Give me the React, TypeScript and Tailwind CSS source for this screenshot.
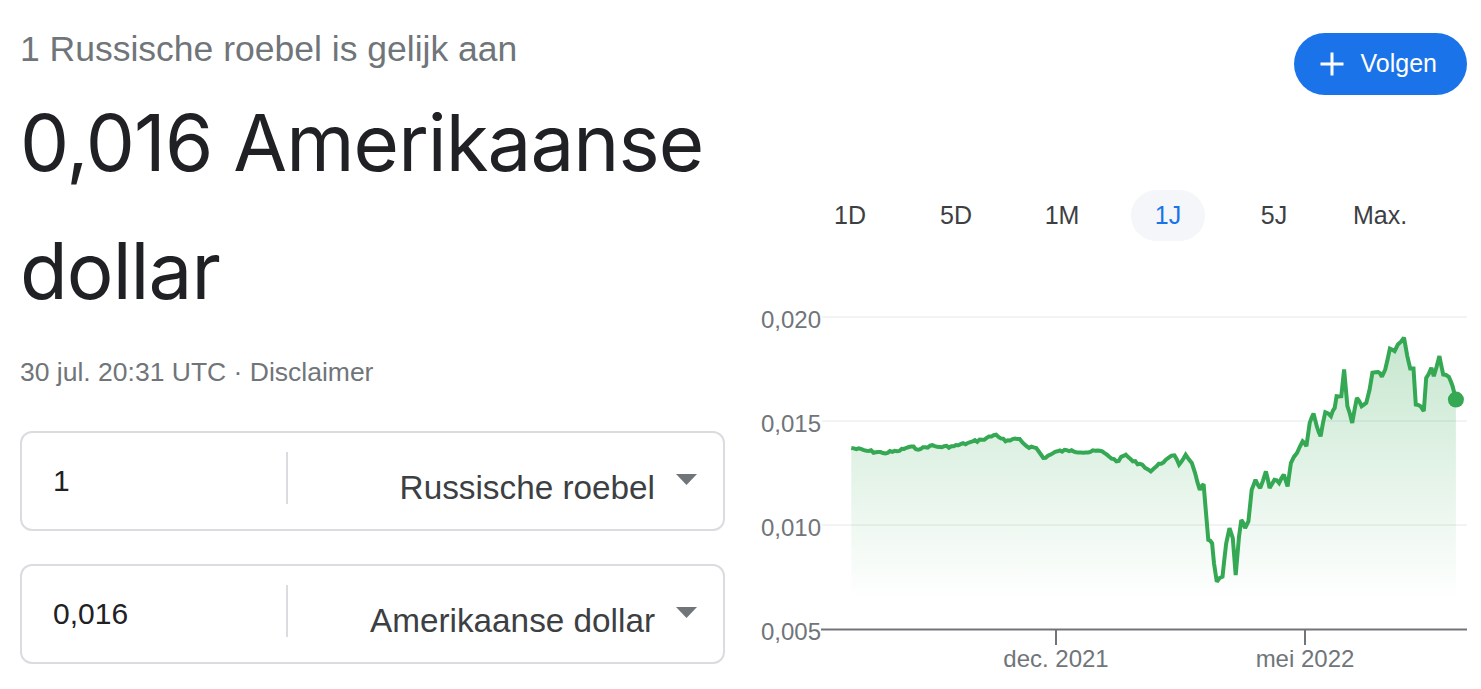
const raw: [number, number][] = [
  [233, 475], [265, 483], [300, 490], [330, 485], [355, 472], [380, 478], [400, 468],
  [420, 472], [450, 470], [480, 460], [510, 450], [540, 435], [560, 455], [590, 448],
  [605, 470], [625, 475], [640, 505], [655, 495], [670, 485], [700, 482], [730, 488],
  [760, 483], [775, 495], [795, 515], [815, 495], [830, 515], [850, 525], [868, 545],
  [880, 530], [900, 510], [918, 497], [928, 525], [942, 495], [955, 520], [962, 550],
  [972, 600], [980, 583], [990, 750], [998, 760], [1002, 820], [1008, 875], [1020, 860],
  [1028, 760], [1035, 715], [1042, 745], [1048, 855], [1055, 740], [1060, 690], [1068, 715],
  [1075, 695], [1082, 600], [1090, 570], [1100, 595], [1112, 545], [1120, 595], [1130, 570],
  [1140, 580], [1150, 555], [1158, 590], [1165, 520], [1178, 490], [1190, 455], [1198, 470],
  [1205, 400], [1213, 372], [1220, 410], [1228, 440], [1238, 368], [1250, 380], [1258, 355],
  [1262, 320], [1272, 320], [1278, 240], [1285, 350], [1295, 400], [1305, 325], [1315, 350],
  [1325, 340], [1332, 300], [1338, 250], [1350, 248], [1358, 262], [1365, 240], [1375, 178],
  [1385, 185], [1392, 165], [1405, 145], [1412, 200], [1418, 237], [1425, 237], [1430, 345],
  [1440, 350], [1447, 365], [1452, 265], [1463, 235], [1468, 260], [1480, 200], [1488, 255],
  [1500, 262], [1508, 290], [1515, 330],
]

// zoomed coords -> page coords
const base = raw.map(([zx, zy]) => [1056 + (zx - 667) * 0.4716, 317 + (zy - 83) * 0.3342])

// fill in daily wiggle between the traced points
const points: number[][] = []
let seed = 7
const rand = () => {
  seed = (seed * 9301 + 49297) % 233280
  return seed / 233280 - 0.5
}
for (let i = 0; i < base.length - 1; i++) {
  const [x0, y0] = base[i]
  const [x1, y1] = base[i + 1]
  const steps = Math.max(1, Math.round((x1 - x0) / 2.5))
  for (let s = 0; s < steps; s++) {
    const t = s / steps
    const wig = s === 0 ? 0 : rand() * 2.6
    points.push([x0 + (x1 - x0) * t, y0 + (y1 - y0) * t + wig])
  }
}
points.push(base[base.length - 1])

const linePath = points.map(([x, y], i) => `${i === 0 ? 'M' : 'L'}${x.toFixed(1)} ${y.toFixed(1)}`).join(' ')
const last = points[points.length - 1]
const areaPath = `${linePath} L${last[0].toFixed(1)} 629 L${points[0][0].toFixed(1)} 629 Z`

const tabs = ['1D', '5D', '1M', '1J', '5J', 'Max.']

function CurrencyBox({ amount, currency }: { amount: string; currency: string }) {
  return (
    <div className="flex items-center h-[100px] border-2 border-[#dadce0] rounded-[12px]">
      <div className="w-[264px] pl-[31px] text-[30px] leading-[36px] text-[#202124]">{amount}</div>
      <div className="w-[1.5px] h-[52px] bg-[#dadce0] mb-[6px]" />
      <div className="flex-1 flex items-center justify-end pr-[26px]">
        <span className="mt-[13px] text-[33.3px] leading-[40px] text-[#3c4043]">{currency}</span>
        <svg width="21" height="11" viewBox="0 0 21 11" className="ml-[21px] mb-[3px]">
          <path d="M0 0 H21 L10.5 11 Z" fill="#70757a" />
        </svg>
      </div>
    </div>
  )
}

export default function App() {
  return (
    <div className="flex w-[1481px] h-[689px] bg-white overflow-hidden font-['Liberation_Sans',Arial,sans-serif]">
      {/* left: converter */}
      <div className="w-[725px] pl-5 flex flex-col">
        <div className="mt-[29px] text-[35.5px] leading-[40px] text-[#70757a]">1 Russische roebel is gelijk aan</div>
        <div className="mt-[10px] font-['Inter',sans-serif] text-[78px] leading-[128px] text-[#202124] tracking-[-0.012em]">
          0,016 Amerikaanse dollar
        </div>
        <div className="mt-[21px] text-[26.5px] leading-[32px] text-[#70757a]">30 jul. 20:31 UTC · Disclaimer</div>
        <div className="mt-[43px] flex flex-col gap-[33px]">
          <CurrencyBox amount="1" currency="Russische roebel" />
          <CurrencyBox amount="0,016" currency="Amerikaanse dollar" />
        </div>
      </div>

      {/* right: chart */}
      <div className="flex-1 flex flex-col">
        <div className="flex justify-end pr-[14px] pt-[33px]">
          <button className="flex items-center h-[62px] pl-[26px] pr-[30px] rounded-full bg-[#1a73e8] text-white text-[25px]">
            <svg width="24" height="24" viewBox="0 0 24 24">
              <path d="M12 0.5v23M0.5 12h23" stroke="white" strokeWidth="3" fill="none" />
            </svg>
            <span className="ml-[17px]">Volgen</span>
          </button>
        </div>

        <div className="mt-[95px] ml-[72px] grid grid-cols-[repeat(6,106px)] h-[51px]">
          {tabs.map((t) => (
            <div key={t} className="flex items-center justify-center">
              {t === '1J' ? (
                <div className="w-[74px] h-[51px] rounded-full bg-[#f4f6f9] flex items-center justify-center text-[25px] text-[#1a73e8]">
                  {t}
                </div>
              ) : (
                <span className="text-[25px] text-[#3c4043]">{t}</span>
              )}
            </div>
          ))}
        </div>

        <svg width="756" height="399" viewBox="725 290 756 399" className="mt-[49px] block">
          <defs>
            <linearGradient id="fill" gradientUnits="userSpaceOnUse" x1="0" y1="337" x2="0" y2="600">
              <stop offset="0" stopColor="#34a853" stopOpacity="0.28" />
              <stop offset="1" stopColor="#34a853" stopOpacity="0" />
            </linearGradient>
          </defs>
          {[317, 421, 525].map((y) => (
            <line key={y} x1="822" x2="1467" y1={y} y2={y} stroke="#f1f3f4" strokeWidth="2" />
          ))}
          <path d={areaPath} fill="url(#fill)" />
          <path d={linePath} fill="none" stroke="#34a853" strokeWidth="4" strokeLinejoin="miter" strokeMiterlimit="2" />
          <circle cx={last[0]} cy={last[1]} r="8" fill="#34a853" />
          <line x1="821" x2="1467" y1="629.5" y2="629.5" stroke="#70757a" strokeWidth="2" />
          <line x1="1056" x2="1056" y1="629" y2="645" stroke="#70757a" strokeWidth="2" />
          <line x1="1305" x2="1305" y1="629" y2="645" stroke="#70757a" strokeWidth="2" />
          <g fontFamily="'Liberation Sans', Arial, sans-serif" fontSize="24" fill="#70757a">
            <text x="821" y="327.5" textAnchor="end">0,020</text>
            <text x="821" y="431.5" textAnchor="end">0,015</text>
            <text x="821" y="535.5" textAnchor="end">0,010</text>
            <text x="821" y="639.5" textAnchor="end">0,005</text>
            <text x="1056" y="667" textAnchor="middle">dec. 2021</text>
            <text x="1305" y="667" textAnchor="middle">mei 2022</text>
          </g>
        </svg>
      </div>
    </div>
  )
}
